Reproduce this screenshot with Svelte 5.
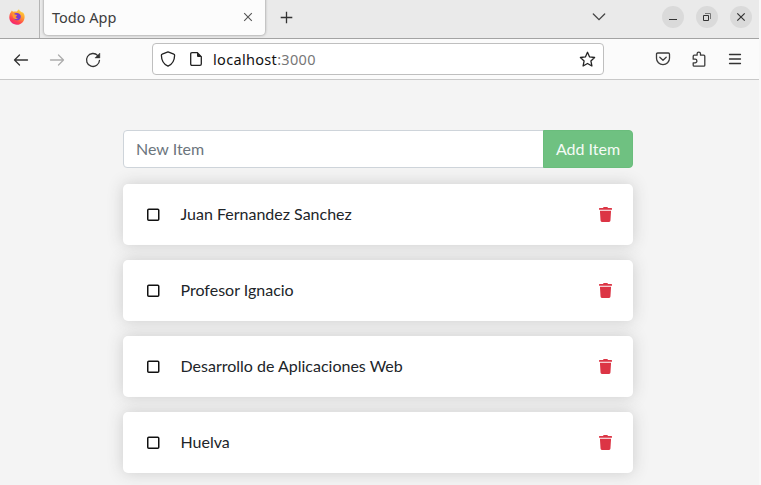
<script>
  let items = $state([
    { name: 'Juan Fernandez Sanchez', done: false },
    { name: 'Profesor Ignacio', done: false },
    { name: 'Desarrollo de Aplicaciones Web', done: false },
    { name: 'Huelva', done: false }
  ]);
  let draft = $state('');

  function addItem(event) {
    event.preventDefault();
    if (!draft.trim()) return;
    items.push({ name: draft, done: false });
    draft = '';
  }
</script>

<div class="window">
  <header class="tabs">
    <div class="pinned">
      <svg width="16" height="16" viewBox="0 0 16 16">
        <defs>
          <linearGradient id="flame" x1="0.8" y1="0" x2="0.25" y2="1">
            <stop offset="0" stop-color="#ffe040" />
            <stop offset="0.4" stop-color="#ff9a30" />
            <stop offset="0.75" stop-color="#ff4050" />
            <stop offset="1" stop-color="#ee2080" />
          </linearGradient>
        </defs>
        <path d="M1.8 3.2C2.4 2.5 2.7 2 2.9 1.4C3.3 2 3.7 2.4 4.2 2.7C5 2.3 6.3 2.4 7.3 2.6C8 2.800 8.500 1 10 .2C10.200 1.500 11.500 2.200 12.400 3.100C13 3.400 13.600 3.500 13.700 3.200C15.100 4.500 15.800 6.400 15.600 8.400C15.200 12.700 12.100 15.700 8 15.700C3.700 15.700 .3 12.500 .3 8.300C.3 6.300.8 4.500 1.800 3.200Z" fill="url(#flame)" />
        <path d="M4.600 5.400C6 4 8.700 3.500 10.600 5C12.400 6.500 12.200 9.500 10.200 10.800C8.300 12 5.700 11.100 4.800 9.200L7 8.200L7.500 6.600Z" fill="#7b3bd0" />
        <path d="M3.2 5.4C4.2 4.8 5.4 5 6 5.5L8.3 6C7.9 6.9 6.8 7 6.5 7.6C6.2 8.4 7.2 9.3 8.9 8.9C8 10.4 5.5 10.3 4.3 8.7Z" fill="#ff9a30" />
      </svg>
    </div>
    <div class="tab">
      <span class="title">Todo App</span>
      <svg width="10" height="10" viewBox="0 0 10 10"><path d="M1.2 1.2L8.8 8.8M8.8 1.2L1.2 8.8" stroke="#555" stroke-width="1.1" /></svg>
    </div>
    <svg class="plus" width="13" height="13" viewBox="0 0 13 13"><path d="M6.5.7V12.3M.7 6.5H12.3" stroke="#333" stroke-width="1.3" /></svg>
    <svg class="chevron" width="14" height="8" viewBox="0 0 14 8"><path d="M1.3 1L7 6.7L12.7 1" fill="none" stroke="#444" stroke-width="1.3" stroke-linecap="round" /></svg>
    <div class="controls">
      <span><svg width="22" height="22" viewBox="0 0 22 22"><path d="M7 13.5H15" stroke="#333" /></svg></span>
      <span><svg width="22" height="22" viewBox="0 0 22 22" fill="none" stroke="#333"><path d="M7.5 9.5H12.5V14.5H7.5Z" /><path d="M9 7.5H14.5V13" stroke="#777" /></svg></span>
      <span><svg width="22" height="22" viewBox="0 0 22 22"><path d="M7.3 7.3L14.7 14.7M14.7 7.3L7.3 14.7" stroke="#333" stroke-width="1.2" /></svg></span>
    </div>
  </header>

  <nav class="toolbar">
    <div class="history">
      <svg width="16" height="16" viewBox="0 0 16 16" fill="none" stroke="#333" stroke-width="1.3" stroke-linecap="round" stroke-linejoin="round"><path d="M14.500 8H1.500M6.500 3L1.500 8L6.500 13" /></svg>
      <svg width="16" height="16" viewBox="0 0 16 16" fill="none" stroke="#adadad" stroke-width="1.3" stroke-linecap="round" stroke-linejoin="round"><path d="M1.500 8H14.500M9.500 3L14.500 8L9.500 13" /></svg>
      <svg width="16" height="16" viewBox="0 0 16 16"><path d="M12.8 3.6A6.5 6.5 0 1 0 14.5 8.3" fill="none" stroke="#333" stroke-width="1.3" stroke-linecap="round" /><path d="M14.9 1V6H9.9Z" fill="#333" stroke="#333" stroke-width=".4" stroke-linejoin="round" /></svg>
    </div>
    <div class="address">
      <svg width="16" height="16" viewBox="0 0 16 16" fill="none" stroke="#222" stroke-width="1.3" stroke-linejoin="round"><path d="M8 .9L13.8 3.1Q14.7 3.4 14.6 4.5C14.5 9.6 12.3 13.3 8 15.2C3.7 13.3 1.5 9.6 1.4 4.5Q1.3 3.4 2.2 3.1Z" /></svg>
      <svg class="page" width="14" height="16" viewBox="0 0 14 16"><path d="M3 1.7H8.3L12.3 5.7V13Q12.3 14.3 11 14.3H3Q1.7 14.3 1.7 13V3Q1.7 1.7 3 1.7Z" fill="none" stroke="#222" stroke-width="1.3" /><path d="M8 1.4L12.6 6H9Q8 6 8 5Z" fill="#222" /></svg>
      <span class="url">localhost<i>:3000</i></span>
      <svg class="star" width="17" height="17" viewBox="0 0 17 17"><path d="M8.5 1.3L10.6 5.9L15.6 6.5L11.9 9.9L12.9 15L8.5 12.5L4.1 15L5.1 9.9L1.4 6.5L6.4 5.9Z" fill="none" stroke="#222" stroke-width="1.3" stroke-linejoin="round" /></svg>
    </div>
    <div class="actions">
      <svg width="16" height="16" viewBox="0 0 16 16" fill="none" stroke="#3b3b3b" stroke-width="1.3" stroke-linecap="round" stroke-linejoin="round"><path d="M2.7 2H13.3Q14.5 2 14.5 3.2V7.3A6.5 6.3 0 0 1 1.5 7.3V3.2Q1.5 2 2.7 2Z" /><path d="M4.8 6.2L8 9.2L11.2 6.2" /></svg>
      <svg width="16" height="16" viewBox="0 0 16 16" fill="none" stroke="#3b3b3b" stroke-width="1.3" stroke-linejoin="round"><path d="M2.2 7V5.2Q2.2 4.2 3.2 4.2H6.1V2.8A1.6 1.6 0 0 1 9.5 2.8V4.2H12.8Q13.8 4.2 13.8 5.2V14.2Q13.8 15.2 12.8 15.2H3.2Q2.2 15.2 2.2 14.2V11.8H4.1A1.8 1.8 0 0 0 4.1 8.2H2.2Z" /></svg>
      <svg width="16" height="16" viewBox="0 0 16 16" stroke="#333" stroke-width="1.3" stroke-linecap="round"><path d="M2.500 3.500H13.500M2.500 8H13.500M2.500 12.500H13.500" /></svg>
    </div>
  </nav>

  <main>
    <form onsubmit={addItem}>
      <input placeholder="New Item" bind:value={draft} />
      <button class="add">Add Item</button>
    </form>
    {#each items as item, index}
      <article>
        <button class="check" aria-label="Toggle item" onclick={() => (item.done = !item.done)}>
          <svg width="14" height="14" viewBox="0 0 14 14"><rect x="1.75" y="1.25" width="11" height="11" rx="1" fill={item.done ? '#111' : 'none'} stroke="#111" stroke-width="1.5" /></svg>
        </button>
        <span class="name">{item.name}</span>
        <button class="remove" aria-label="Remove item" onclick={() => items.splice(index, 1)}>
          <svg width="13" height="15" viewBox="0 0 448 512"><path fill="#dc3545" d="M432 32H312l-9.400-18.700A24 24 0 0 0 281.100 0H166.800a23.700 23.700 0 0 0-21.400 13.300L136 32H16A16 16 0 0 0 0 48v32a16 16 0 0 0 16 16h416a16 16 0 0 0 16-16V48a16 16 0 0 0-16-16zM53.200 467a48 48 0 0 0 47.900 45h245.800a48 48 0 0 0 47.900-45L416 128H32z" /></svg>
        </button>
      </article>
    {/each}
  </main>
</div>

<style>
  :global(body) { background: #f8f8f8; overflow: hidden; }
  .window { width: 759px; height: 485px; overflow: hidden; background: #f4f4f4; }
  .window :global(*) { box-sizing: border-box; }
  svg { display: block; flex: none; }
  button { padding: 0; border: 0; background: none; }
  .tabs { display: flex; height: 39px; background: #eaeaea; border-bottom: 1px solid #a3a3a3; }
  .pinned { width: 40px; border-right: 1px solid #b4b4b4; padding: 9px 0 0 9px; }
  .tab { display: flex; align-items: center; justify-content: space-between; width: 221px; height: 40px; margin: -5px 0 0 4px; padding: 4px 12px 0 8px; background: #fcfcfc; border-radius: 4px; box-shadow: 0 0 3px rgba(0, 0, 0, .45); }
  .title { font: 14.5px/20px "Noto Sans", sans-serif; color: #3d3d3d; }
  .plus { margin: 11px 0 0 15px; }
  .chevron { margin: 13px 0 0 299px; }
  .controls { display: flex; gap: 12px; margin: 6px 0 0 56px; }
  .controls span { width: 22px; height: 22px; border-radius: 50%; background: #dadada; }
  .toolbar { display: flex; height: 41px; padding-top: 4px; background: #fbfbfb; border-bottom: 1px solid #c8c8c8; }
  .history { display: flex; gap: 20px; width: 152px; padding: 9px 0 0 13px; }
  .address { display: flex; align-items: center; width: 452px; height: 32px; padding: 0 7px; background: #fff; border: 1px solid #bfbfbf; border-radius: 4px; }
  .page { margin-left: 13px; }
  .url { margin-left: 10px; font: 14.5px/20px "Noto Sans", sans-serif; letter-spacing: .32px; color: #111; }
  .url i { font-style: normal; color: #777; }
  .star { margin-left: auto; }
  .actions { display: flex; gap: 20px; padding: 8px 0 0 51px; }
  main { width: 510px; margin: 50px 0 0 123px; font: 16px/24px Lato, sans-serif; color: #212529; }
  form { display: flex; height: 38px; margin-bottom: 16px; }
  input { flex: 1; min-width: 0; margin-right: -1px; padding: 6px 12px; border: 1px solid #ced4da; border-radius: 4px 0 0 4px; font: inherit; background: #fff; }
  input::placeholder { color: #6c757d; opacity: 1; }
  .add { width: 90px; background: #6fc181; border: 1px solid #6abd7c; border-radius: 0 4px 4px 0; color: #f5fbf6; font: inherit; z-index: 1; }
  article { display: flex; align-items: center; height: 61px; margin-bottom: 15px; padding: 0 21px 0 23px; background: #fff; border-radius: 5px; box-shadow: 0 0 16px #ccc; }
  .name { flex: 1; margin-left: 20.5px; padding-bottom: 2px; }
</style>
